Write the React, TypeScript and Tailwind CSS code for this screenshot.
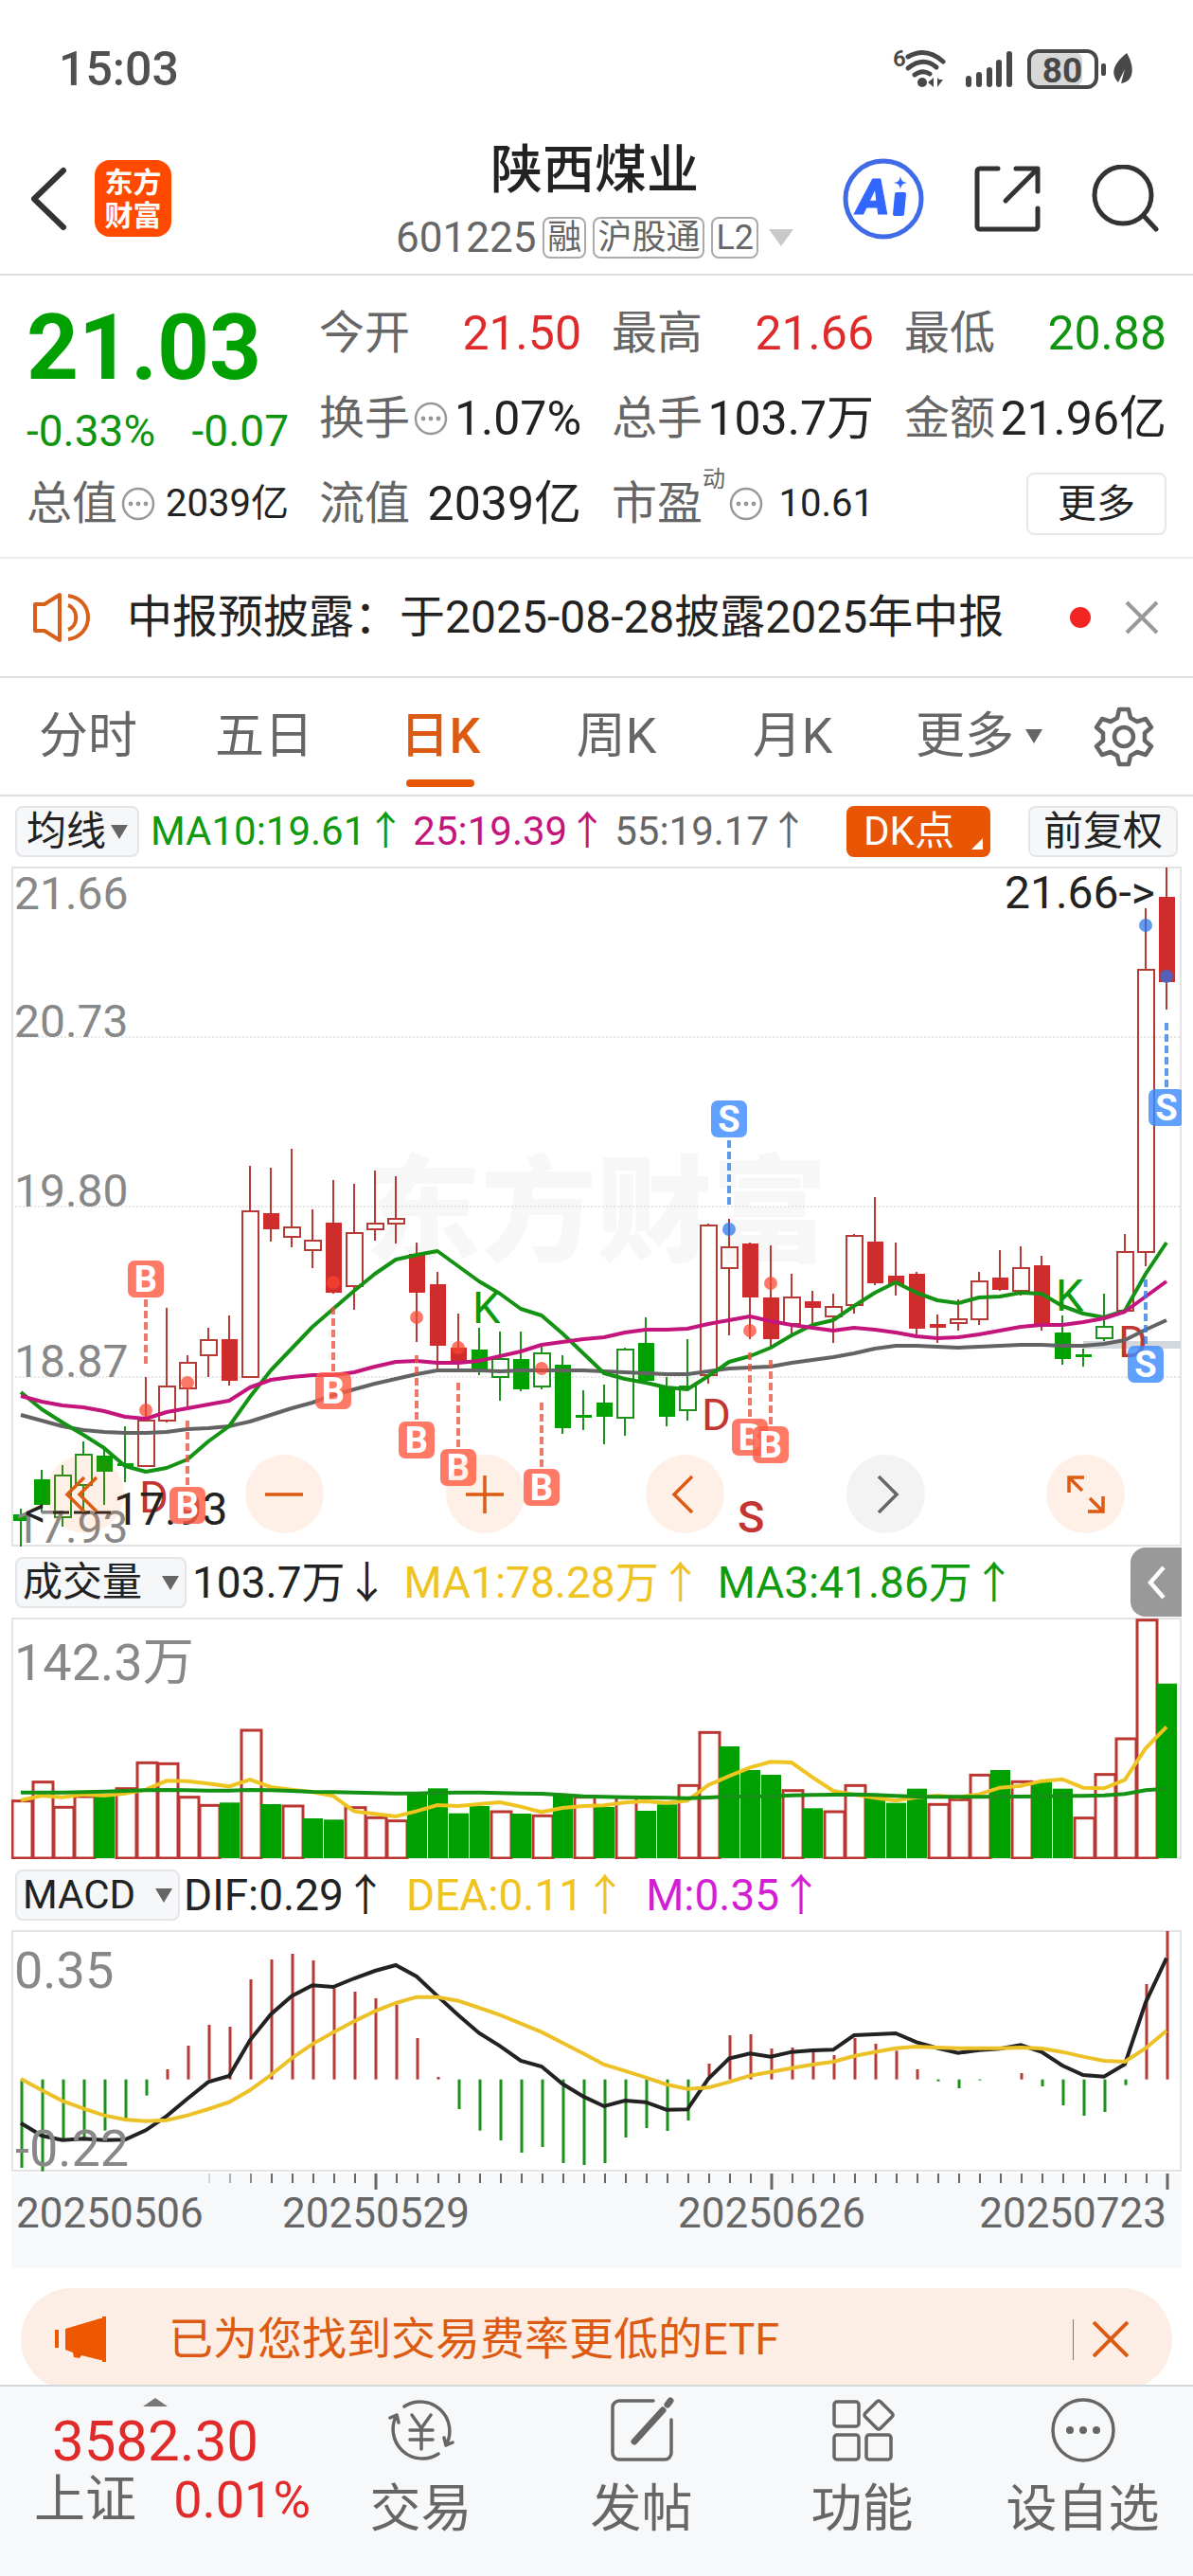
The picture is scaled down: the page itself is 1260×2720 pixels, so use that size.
import { useState, type ReactNode } from "react"

type Kind = "R" | "r" | "G" | "g"
type Candle = [high: number, top: number, bottom: number, low: number, kind: Kind]

// R / G are solid bodies, r / g are hollow ones
const candles: Candle[] = [
  [1593, 1599, 1606, 1633, "G"], [1552, 1562, 1589, 1597, "G"], [1547, 1558, 1602, 1612, "g"], [1522, 1536, 1568, 1594, "g"],
  [1528, 1537, 1554, 1589, "G"], [1506, 1545, 1548, 1565, "G"], [1454, 1500, 1548, 1549, "r"], [1381, 1464, 1500, 1502, "r"],
  [1431, 1439, 1466, 1487, "r"], [1402, 1415, 1431, 1454, "r"], [1389, 1414, 1458, 1463, "R"], [1231, 1279, 1454, 1454, "r"],
  [1233, 1281, 1298, 1311, "R"], [1213, 1296, 1306, 1317, "r"], [1277, 1310, 1320, 1339, "r"], [1246, 1291, 1365, 1366, "R"],
  [1250, 1302, 1358, 1383, "r"], [1236, 1292, 1298, 1310, "r"], [1242, 1287, 1292, 1313, "r"], [1312, 1324, 1365, 1417, "R"],
  [1343, 1356, 1421, 1445, "R"], [1387, 1423, 1439, 1446, "R"], [1402, 1425, 1448, 1452, "G"], [1406, 1435, 1454, 1479, "g"],
  [1406, 1435, 1467, 1469, "G"], [1421, 1429, 1464, 1467, "g"], [1431, 1441, 1508, 1514, "G"], [1468, 1494, 1497, 1510, "G"],
  [1462, 1481, 1496, 1525, "G"], [1423, 1425, 1497, 1516, "g"], [1391, 1418, 1458, 1460, "G"], [1454, 1465, 1496, 1506, "G"],
  [1414, 1464, 1489, 1500, "g"], [1292, 1294, 1452, 1461, "r"], [1287, 1317, 1339, 1410, "r"], [1312, 1313, 1370, 1414, "R"],
  [1315, 1370, 1414, 1422, "R"], [1345, 1370, 1398, 1410, "r"], [1363, 1374, 1381, 1397, "R"], [1366, 1380, 1390, 1418, "r"],
  [1303, 1305, 1378, 1387, "r"], [1264, 1311, 1355, 1357, "R"], [1312, 1347, 1356, 1368, "R"], [1343, 1345, 1403, 1412, "R"],
  [1388, 1398, 1402, 1418, "R"], [1372, 1393, 1397, 1405, "r"], [1343, 1353, 1393, 1399, "r"], [1320, 1349, 1362, 1363, "R"],
  [1316, 1339, 1363, 1368, "r"], [1326, 1336, 1399, 1405, "R"], [1389, 1407, 1435, 1441, "G"], [1424, 1430, 1433, 1443, "G"],
  [1366, 1401, 1413, 1416, "g"], [1303, 1322, 1384, 1384, "r"], [959, 1024, 1322, 1337, "r"], [916, 947, 1037, 1066, "R"],
]

const ma10 = [1470, 1488, 1502, 1515, 1529, 1548, 1554, 1550, 1541, 1522, 1506, 1475, 1447, 1424, 1401, 1382, 1363, 1345, 1330, 1325, 1321, 1337, 1353, 1366, 1382, 1389, 1408, 1429, 1450, 1456, 1460, 1465, 1467, 1453, 1438, 1432, 1423, 1410, 1399, 1394, 1379, 1365, 1354, 1365, 1373, 1376, 1370, 1369, 1365, 1366, 1379, 1387, 1391, 1384, 1345, 1312]
const ma25 = [1474, 1480, 1484, 1486, 1490, 1496, 1498, 1491, 1487, 1483, 1479, 1465, 1457, 1454, 1452, 1452, 1449, 1443, 1438, 1437, 1439, 1439, 1437, 1432, 1427, 1420, 1417, 1414, 1412, 1407, 1404, 1404, 1403, 1398, 1394, 1390, 1395, 1399, 1402, 1405, 1402, 1404, 1407, 1411, 1413, 1412, 1409, 1405, 1401, 1399, 1399, 1396, 1392, 1385, 1369, 1353]
const ma55 = [1494, 1500, 1506, 1510, 1512, 1513, 1513, 1512, 1509, 1508, 1506, 1501, 1494, 1487, 1481, 1473, 1467, 1461, 1456, 1451, 1447, 1447, 1447, 1448, 1447, 1447, 1447, 1447, 1448, 1449, 1450, 1451, 1451, 1448, 1445, 1444, 1443, 1439, 1436, 1433, 1429, 1424, 1421, 1421, 1422, 1423, 1422, 1421, 1420, 1420, 1421, 1421, 1419, 1415, 1404, 1394]

const volumes = [809, 749, 829, 795, 797, 770, 688, 691, 797, 823, 817, 585, 822, 825, 867, 871, 830, 862, 872, 785, 772, 851, 828, 843, 852, 856, 789, 797, 831, 797, 843, 823, 760, 592, 639, 714, 729, 776, 835, 843, 760, 800, 818, 773, 820, 805, 727, 714, 748, 750, 773, 863, 725, 612, 236, 440]
const volumeKinds = "rrrrGrrrrrGrGrGGrrrGGGGrGrGrGrGGrrGGGrGrrGGGrrrGrGGrrrrG"
const volumeMa1 = [810, 795, 800, 791, 795, 788, 776, 748, 749, 757, 766, 744, 768, 776, 784, 796, 845, 853, 861, 844, 825, 828, 822, 816, 830, 847, 834, 828, 826, 817, 813, 818, 811, 762, 733, 706, 688, 690, 737, 780, 792, 802, 811, 800, 795, 800, 791, 770, 764, 749, 743, 770, 772, 745, 645, 577]
const volumeMa3 = [785, 785, 785, 784, 782, 780, 778, 777, 778, 779, 779, 777, 778, 780, 783, 784, 785, 787, 788, 788, 786, 785, 785, 787, 788, 789, 793, 797, 799, 800, 801, 802, 803, 801, 798, 797, 797, 794, 793, 792, 791, 793, 796, 798, 799, 799, 799, 798, 798, 797, 796, 796, 794, 790, 778, 773]

const macd = [954, 965, 870, 868, 836, 800, 725, 642, 567, 501, 507, 357, 294, 276, 297, 385, 396, 417, 437, 543, 666, 768, 836, 867, 906, 888, 939, 945, 939, 858, 828, 837, 804, 624, 534, 531, 576, 573, 587, 597, 543, 561, 583, 642, 680, 702, 677, 674, 654, 696, 756, 789, 777, 692, 372, 204]
const dif = [812, 852, 866, 862, 866, 865, 835, 790, 735, 682, 663, 550, 468, 410, 376, 381, 354, 330, 312, 348, 410, 470, 527, 568, 615, 633, 688, 728, 759, 741, 746, 770, 769, 672, 608, 592, 602, 587, 582, 580, 534, 531, 528, 556, 575, 590, 581, 577, 565, 587, 630, 660, 665, 626, 430, 290]
const dea = [672, 708, 742, 766, 788, 801, 806, 803, 788, 768, 746, 708, 660, 607, 562, 525, 490, 458, 432, 413, 413, 425, 447, 470, 497, 524, 558, 592, 627, 647, 668, 690, 704, 700, 682, 662, 650, 638, 627, 618, 600, 587, 575, 570, 573, 575, 575, 575, 573, 576, 587, 602, 615, 618, 575, 520]

const tabs = ["分时", "五日", "日K", "周K", "月K"]

const RED = "#b83a35"
const GREEN = "#1a921a"

const cx = (i: number) => 22 + i * 22
const toPoints = (values: number[], y: (v: number) => number = (v) => v) =>
  values.map((v, i) => `${cx(i)},${y(v)}`).join(" ")

function Marker({ x, box, from, dot, letter }: { x: number; box: number; from: number; dot: number; letter: "B" | "S" }) {
  const buy = letter === "B"
  const color = buy ? "#ff5c45" : "#3d8bff"
  return (
    <g>
      <circle cx={x} cy={dot} r={7} fill={buy ? "#fb4531" : "#2476ea"} fillOpacity={0.72} />
      <line x1={x} x2={x} y1={from} y2={from + 68} stroke={buy ? "#e55540" : "#2f7fe8"} strokeOpacity={0.78} strokeWidth={4} strokeDasharray="8 4" />
      <rect x={x - 19} y={box} width={38} height={39} rx={7} fill={color} fillOpacity={0.82} />
      <text x={x} y={box + 33} fontSize={38} fontWeight={700} textAnchor="middle" fill="#fff">{letter}</text>
    </g>
  )
}

function PriceChart() {
  return (
    <svg viewBox="12 915 1236 718" className="block w-full" role="img" aria-label="日K线图">
      <text x={386} y={1322} fontSize={122} fontWeight={900} fill="#f7f7f7">东方财富</text>
      {[1095, 1274, 1454].map((y) => (
        <line key={y} x1={12} x2={1247} y1={y} y2={y} stroke="#cfcfcf" strokeWidth={1} strokeDasharray="2 2" />
      ))}
      <rect x={13} y={916} width={1234} height={716} fill="none" stroke="#e3e3e3" strokeWidth={2} />
      <rect x={1144} y={1416} width={103} height={8} fill="#d3d8dc" />
      {candles.map(([high, top, bottom, low, kind], i) => {
        const hollow = kind === "r" || kind === "g"
        const line = kind === "R" || kind === "r" ? RED : GREEN
        return (
          <g key={i}>
            <line x1={cx(i)} x2={cx(i)} y1={high} y2={top} stroke={line} strokeWidth={2} />
            <line x1={cx(i)} x2={cx(i)} y1={bottom} y2={low} stroke={line} strokeWidth={2} />
            {hollow ? (
              <rect x={cx(i) - 8} y={top} width={17} height={bottom - top} fill="none" stroke={line} strokeWidth={2} />
            ) : (
              <rect x={cx(i) - 8} y={top} width={17} height={bottom - top} fill={kind === "R" ? "#cf2d2d" : "#00a000"} />
            )}
          </g>
        )
      })}
      <g fontSize={48} fill="#888888">
        <text x={15} y={960}>21.66</text>
        <text x={15} y={1095}>20.73</text>
        <text x={15} y={1274}>19.80</text>
        <text x={15} y={1454}>18.87</text>
        <text x={15} y={1629}>17.93</text>
      </g>
      <text x={1061} y={959} fontSize={48} fill="#222">21.66-&gt;</text>
      <g fontSize={47}>
        <text x={147} y={1597} fill="#c43432">D</text>
        <text x={741} y={1510} fill="#c43432">D</text>
        <text x={1181} y={1433} fill="#c43432">D</text>
        <text x={779} y={1618} fill="#c43432" fontWeight={500}>S</text>
        <text x={499} y={1397} fill="#0a9a0a">K</text>
        <text x={1115} y={1384} fill="#0a9a0a">K</text>
      </g>
      <text x={26} y={1612} fontSize={44} fill="#222">&lt;</text>
      <line x1={56} x2={117} y1={1597} y2={1597} stroke="#222" strokeWidth={3} strokeDasharray="17 5" />
      <text x={120} y={1610} fontSize={48} fill="#222">17.93</text>
      <g fill="none" strokeWidth={4} strokeLinejoin="round">
        <polyline points={toPoints(ma55)} stroke="#636363" />
        <polyline points={toPoints(ma10)} stroke="#139213" />
        <polyline points={toPoints(ma25)} stroke="#c4157c" />
      </g>
      <Marker x={154} box={1331} from={1372} dot={1489} letter="B" />
      <Marker x={198} box={1570} from={1500} dot={1460} letter="B" />
      <Marker x={352} box={1449} from={1380} dot={1354} letter="B" />
      <Marker x={440} box={1501} from={1431} dot={1391} letter="B" />
      <Marker x={484} box={1530} from={1460} dot={1423} letter="B" />
      <Marker x={572} box={1551} from={1481} dot={1445} letter="B" />
      <Marker x={792} box={1498} from={1428} dot={1405} letter="B" />
      <Marker x={814} box={1506} from={1436} dot={1355} letter="B" />
      <Marker x={770} box={1162} from={1204} dot={1298} letter="S" />
      <Marker x={1210} box={1421} from={1351} dot={977} letter="S" />
      <Marker x={1232} box={1150} from={1080} dot={1031} letter="S" />
    </svg>
  )
}

function VolumeChart() {
  const y = (v: number) => v / 3 - 77
  return (
    <svg viewBox="12 0 1236 255" className="block w-full" role="img" aria-label="成交量图">
      <rect x={13} y={1} width={1234} height={253} fill="none" stroke="#e3e3e3" strokeWidth={2} />
      {volumes.map((v, i) =>
        volumeKinds[i] === "G" ? (
          <rect key={i} x={cx(i) - 10} y={y(v)} width={21} height={254 - y(v)} fill="#00a000" />
        ) : (
          <rect key={i} x={cx(i) - 9} y={y(v) + 1} width={21} height={253 - y(v)} fill="#fff" stroke="#bc3631" strokeWidth={3} />
        )
      )}
      <polyline points={toPoints(volumeMa1, y)} fill="none" stroke="#efc320" strokeWidth={4} />
      <polyline points={toPoints(volumeMa3, y)} fill="none" stroke="#139213" strokeWidth={4} />
      <text x={15} y={66} fontSize={54} fill="#888888">142.3万</text>
    </svg>
  )
}

function MacdChart() {
  const y = (v: number) => v / 3 - 67
  return (
    <svg viewBox="12 0 1236 255" className="block w-full" role="img" aria-label="MACD图">
      <rect x={13} y={1} width={1234} height={253} fill="none" stroke="#e3e3e3" strokeWidth={2} />
      {macd.map((v, i) => (
        <line key={i} x1={cx(i) + 1} x2={cx(i) + 1} y1={y(674)} y2={y(v)} stroke={v < 674 ? RED : GREEN} strokeWidth={3} />
      ))}
      <polyline points={toPoints(dif, y)} fill="none" stroke="#222" strokeWidth={4} />
      <polyline points={toPoints(dea, y)} fill="none" stroke="#ecc128" strokeWidth={4} />
      <text x={15} y={61} fontSize={54} fill="#888888">0.35</text>
      <text x={16} y={249} fontSize={54} fill="#888888">-0.22</text>
    </svg>
  )
}

function DateAxis() {
  return (
    <svg viewBox="12 0 1236 100" className="block w-full bg-[#f7f8fa]" role="img" aria-label="日期">
      {candles.map((_, i) => {
        if (i < 9) return null
        const major = i === 17 || i === 36 || i === 55
        return (
          <line key={i} x1={cx(i) + 1} x2={cx(i) + 1} y1={0} y2={major ? 17 : 10} stroke="#666" strokeOpacity={i < 12 ? (i - 8) * 0.25 : 1} strokeWidth={major ? 3 : 2} />
        )
      })}
      <g fontSize={44} fill="#666666">
        <text x={17} y={57}>20250506</text>
        <text x={397} y={57} textAnchor="middle">20250529</text>
        <text x={815} y={57} textAnchor="middle">20250626</text>
        <text x={1232} y={57} textAnchor="end">20250723</text>
      </g>
    </svg>
  )
}

function StatusIcons() {
  return (
    <svg width={260} height={48} viewBox="940 48 260 48" fill="#484848" aria-hidden="true">
      <text x={943} y={69} fontSize={24} fontWeight={600}>6</text>
      <g fill="none" stroke="#484848" strokeWidth={5} strokeLinecap="round">
        <path d="M959 59Q978 48 996 64" />
        <path d="M959 71Q975 58 989 70" />
        <path d="M966 78Q974 72 982 77" />
      </g>
      <circle cx={974} cy={86} r={5} />
      <path d="M986 81v10l-6-5zM990 81v10l6-8-4 0z" />
      <rect x={1020} y={79} width={6} height={12} rx={3} />
      <rect x={1031} y={75} width={6} height={16} rx={3} />
      <rect x={1042} y={70} width={6} height={21} rx={3} />
      <rect x={1052} y={62} width={6} height={29} rx={3} />
      <rect x={1063} y={53} width={6} height={38} rx={3} />
      <rect x={1088} y={54} width={55} height={36} rx={8} fill="#d8d8d8" />
      <rect x={1087} y={53} width={71} height={38} rx={10} fill="none" stroke="#484848" strokeWidth={4} />
      <text x={1122} y={86} fontSize={37} fontWeight={700} textAnchor="middle">80</text>
      <rect x={1163} y={66} width={5} height={13} rx={2} />
      <path d="M1190 55c8 13 9 30-6 32l4-15-7 14c-8-9-6-19 9-31z" />
    </svg>
  )
}

function Dots() {
  return (
    <svg className="mx-1 size-9 shrink-0" viewBox="0 0 36 36" fill="none" stroke="#999" strokeWidth={2.5} aria-hidden="true">
      <circle cx={18} cy={18} r={16} />
      <g fill="#999" stroke="none">
        <circle cx={10} cy={18} r={2.4} />
        <circle cx={18} cy={18} r={2.4} />
        <circle cx={26} cy={18} r={2.4} />
      </g>
    </svg>
  )
}

function Stat({ label, value, tone = "text-[#222]", dots, small, sup }: { label: string; value: string; tone?: string; dots?: boolean; small?: boolean; sup?: string }) {
  return (
    <div className="flex h-[90px] items-center whitespace-nowrap">
      <dt className="flex items-center text-[48px] leading-[56px] text-[#666]">
        {label}
        {sup && <span className="-mt-3 self-start text-[24px] leading-[28px]">{sup}</span>}
        {dots && <Dots />}
      </dt>
      <dd className={`ml-auto leading-[56px] ${small ? "text-[40px]" : "text-[50px]"} ${tone}`}>{value}</dd>
    </div>
  )
}

function Picker({ name, option, className }: { name: string; option: string; className: string }) {
  return (
    <label className={`flex h-[54px] shrink-0 items-center rounded-lg border-2 border-[#e3e5e9] bg-[#f6f7f9] ${className}`}>
      <select aria-label={name} className="appearance-none bg-transparent text-[42px] leading-[48px] text-[#222] outline-none">
        <option>{option}</option>
      </select>
      <svg className="h-4 w-[18px] shrink-0" viewBox="0 0 18 16" fill="#666" aria-hidden="true">
        <path d="M0 1h18L9 16z" />
      </svg>
    </label>
  )
}

function RoundButton({ label, muted, children }: { label: string; muted?: boolean; children: ReactNode }) {
  return (
    <button aria-label={label} className={`size-[83px] rounded-full ${muted ? "bg-[#f3f3f3] text-[#666]" : "bg-[#f26a10]/10 text-[#dd5a12]"}`}>
      <svg className="block size-full" viewBox="0 0 83 83" fill="none" stroke="currentColor" strokeWidth={3.5} aria-hidden="true">
        {children}
      </svg>
    </button>
  )
}

function NavItem({ label, children }: { label: string; children: ReactNode }) {
  return (
    <button className="flex flex-1 flex-col items-center text-[54px] leading-[60px] text-[#666]">
      <svg className="mb-4 size-[76px]" viewBox="0 0 76 76" fill="none" stroke="#666" strokeWidth={3.5} strokeLinecap="round" strokeLinejoin="round" aria-hidden="true">
        {children}
      </svg>
      {label}
    </button>
  )
}

export default function App() {
  const [activeTab, setActiveTab] = useState("日K")
  const [showNotice, setShowNotice] = useState(true)
  const [showBanner, setShowBanner] = useState(true)

  return (
    <div className="flex min-h-screen flex-col bg-white font-['Roboto','Noto_Sans_CJK_SC',sans-serif] text-[#222]">
      <div className="flex h-[130px] items-center justify-between pt-4 pr-[60px] pl-[62px]">
        <span className="text-[50px] leading-[56px] font-medium text-[#505050]">15:03</span>
        <StatusIcons />
      </div>

      <header className="grid h-[161px] grid-cols-[1fr_auto_1fr] items-center border-b-2 border-[#dcdcdc] pr-9 pl-8">
        <div className="flex items-center gap-7">
          <button aria-label="返回">
            <svg width={40} height={68} viewBox="0 0 40 68" fill="none" stroke="#333" strokeWidth={6} strokeLinecap="round" strokeLinejoin="round">
              <path d="M35 4 4 34l31 30" />
            </svg>
          </button>
          <a href="#home" className="flex size-[81px] flex-col items-center justify-center rounded-2xl bg-[#ff4a00] text-[30px] leading-[35px] font-bold text-white">
            <span>东方</span>
            <span>财富</span>
          </a>
        </div>
        <div className="pt-2.5 text-center">
          <h1 className="text-[55px] leading-[72px] font-medium">陕西煤业</h1>
          <div className="flex h-[72px] items-center gap-[7px] text-[36px] leading-[40px] text-[#666]">
            <span className="text-[44px]">601225</span>
            <span className="rounded-lg border-2 border-[#aaa] px-[3px]">融</span>
            <span className="rounded-lg border-2 border-[#aaa] px-[3px]">沪股通</span>
            <span className="rounded-lg border-2 border-[#aaa] px-[3px]">L2</span>
            <svg className="ml-1 h-[18px] w-[26px]" viewBox="0 0 26 18" fill="#c9c9c9" aria-hidden="true">
              <path d="M0 0h26L13 18z" />
            </svg>
          </div>
        </div>
        <div className="flex items-center justify-end gap-[52px]">
          <button aria-label="AI">
            <svg width={86} height={86} viewBox="0 0 86 86">
              <circle cx={43} cy={43} r={40} fill="#fff" stroke="#3f6ae8" strokeWidth={5} />
              <text x={15} y={59} fontSize={52} fontWeight={900} fontStyle="italic" fill="#3267ff" stroke="#3267ff" strokeWidth={1}>A</text>
              <path d="M57 36h8q2 0 2 2l-2 21q0 2-2 2h-8q-2 0-2-2l2-21q0-2 2-2z" fill="#3267ff" />
              <path d="M61 19c1 5 2 6 7 7-5 1-6 2-7 7-1-5-2-6-7-7 5-1 6-2 7-7z" fill="#3267ff" />
            </svg>
          </button>
          <button aria-label="分享">
            <svg width={72} height={72} viewBox="0 0 72 72" fill="none" stroke="#333" strokeWidth={5} strokeLinecap="round" strokeLinejoin="round">
              <path d="M26 4H7a3 3 0 0 0-3 3v58a3 3 0 0 0 3 3h58a3 3 0 0 0 3-3V46M45 4h23v24M66 6 34 38" />
            </svg>
          </button>
          <button aria-label="搜索">
            <svg width={72} height={72} viewBox="0 0 72 72" fill="none" stroke="#333" strokeWidth={5} strokeLinecap="round">
              <circle cx={34} cy={32} r={30} />
              <path d="m56 54 13 14" />
            </svg>
          </button>
        </div>
      </header>

      <dl className="grid h-[299px] grid-cols-4 content-start gap-x-8 border-b-2 border-[#ececec] px-7 pt-4">
        <div className="row-span-2 h-[180px] whitespace-nowrap text-[#0f940f]">
          <dt className="sr-only">最新价</dt>
          <dd className="pt-1 text-[96px] leading-[112px] font-bold text-[#00a000]">21.03</dd>
          <dd className="flex justify-between pt-1 text-[46px] leading-[56px]">
            <span>-0.33%</span>
            <span>-0.07</span>
          </dd>
        </div>
        <Stat label="今开" value="21.50" tone="text-[#de2a2a]" />
        <Stat label="最高" value="21.66" tone="text-[#de2a2a]" />
        <Stat label="最低" value="20.88" tone="text-[#0f940f]" />
        <Stat label="换手" value="1.07%" dots />
        <Stat label="总手" value="103.7万" />
        <Stat label="金额" value="21.96亿" />
        <Stat label="总值" value="2039亿" dots small />
        <Stat label="流值" value="2039亿" />
        <Stat label="市盈" value="10.61" dots small sup="动" />
        <div className="flex h-[90px] items-center justify-end">
          <button className="h-[66px] w-[148px] rounded-lg border-2 border-[#e8e8e8] text-[41px] leading-[48px]">更多</button>
        </div>
      </dl>

      {showNotice && (
        <div className="flex h-[126px] items-center border-b-2 border-[#dcdcdc] pr-9 pl-[34px]">
          <svg className="h-[54px] w-[62px] shrink-0" viewBox="0 0 62 54" fill="none" stroke="#d9601a" strokeWidth={4} strokeLinejoin="round" aria-hidden="true">
            <path d="M3 13h10L29 3v48L13 41H3zM38 14c11 4 11 22 0 26M38 4c28 4 28 42 0 46" />
          </svg>
          <a href="#notice" className="ml-[38px] text-[48px] leading-[56px] whitespace-nowrap">中报预披露：于2025-08-28披露2025年中报</a>
          <span className="ml-auto size-[22px] rounded-full bg-[#f52424]" />
          <button aria-label="关闭公告" className="ml-9" onClick={() => setShowNotice(false)}>
            <svg width={36} height={36} viewBox="0 0 36 36" stroke="#999" strokeWidth={4}>
              <path d="m2 2 32 32M34 2 2 34" />
            </svg>
          </button>
        </div>
      )}

      <nav className="flex h-[125px] items-stretch border-b-2 border-[#dcdcdc] text-[52px] leading-[60px] text-[#666]" aria-label="周期">
        {tabs.map((tab) => (
          <button
            key={tab}
            onClick={() => setActiveTab(tab)}
            className={`relative w-[186px] ${activeTab === tab ? "font-medium text-[#dd5a12]" : ""}`}
          >
            {tab}
            {activeTab === tab && <span className="absolute bottom-2 left-1/2 h-2 w-[72px] -translate-x-1/2 rounded-full bg-[#e85504]" />}
          </button>
        ))}
        <button className="ml-[37px] flex items-center gap-3 whitespace-nowrap">
          更多
          <svg className="h-[15px] w-[18px]" viewBox="0 0 18 15" fill="#666" aria-hidden="true">
            <path d="M0 0h18L9 15z" />
          </svg>
        </button>
        <button aria-label="设置" className="ml-auto pr-[41px]">
          <svg width={64} height={64} viewBox="0 0 64 64" fill="none" stroke="#666" strokeWidth={4.5} strokeLinejoin="round">
            <path d="M27 3h10l2 9 7 4 9-3 6 9-7 6v8l7 6-6 9-9-3-7 4-2 9H27l-2-9-7-4-9 3-6-9 7-6v-8l-7-6 6-9 9 3 7-4z" />
            <circle cx={32} cy={32} r={10} />
          </svg>
        </button>
      </nav>

      <div className="flex h-[74px] items-center pr-4 pl-4 text-[42px] leading-[48px] whitespace-nowrap">
        <Picker name="主图指标" option="均线" className="gap-1 px-2.5" />
        <div className="ml-3 flex gap-2">
          <span className="text-[#0f9a0f]">MA10:19.61↑</span>
          <span className="text-[#c4157c]">25:19.39↑</span>
          <span className="text-[#666]">55:19.17↑</span>
        </div>
        <button className="relative ml-auto h-[54px] w-[152px] rounded-lg bg-[#e85504] pr-5 text-white">
          DK点
          <svg className="absolute right-2 bottom-2 size-3" viewBox="0 0 12 12" fill="#fff" aria-hidden="true">
            <path d="M12 0v12H0z" />
          </svg>
        </button>
        <button className="ml-10 h-[54px] rounded-lg border-2 border-[#e3e5e9] bg-[#f6f7f9] px-3.5">前复权</button>
      </div>

      <main className="mx-3">
        <div className="relative">
          <PriceChart />
          <div className="absolute inset-x-0 bottom-3.5 flex justify-between pr-[60px] pl-9">
            <RoundButton label="最早"><path d="M41 24 23 42l18 18M54 24 36 42l18 18" /></RoundButton>
            <RoundButton label="缩小"><path d="M21 42h40" /></RoundButton>
            <RoundButton label="放大"><path d="M21 42h40M41 22v40" /></RoundButton>
            <RoundButton label="向左"><path d="M49 23 30 42l19 19" /></RoundButton>
            <RoundButton label="向右" muted><path d="m34 23 19 19-19 19" /></RoundButton>
            <RoundButton label="全屏"><path d="M40 24H24v16M24 24l14 14M44 60h16V44M60 60 46 46" /></RoundButton>
          </div>
        </div>

        <div className="flex h-[75px] items-center pl-1 text-[46px] leading-[52px] whitespace-nowrap">
          <Picker name="副图指标一" option="成交量" className="gap-5 px-1.5" />
          <div className="ml-1.5 flex gap-4">
            <span>103.7万↓</span>
            <span className="text-[#efc320]">MA1:78.28万↑</span>
            <span className="text-[#0f9a0f]">MA3:41.86万↑</span>
          </div>
          <button aria-label="展开侧栏" className="ml-auto h-[73px] w-[54px] rounded-l-2xl bg-[#999]">
            <svg className="mx-auto" width={24} height={40} viewBox="0 0 24 40" fill="none" stroke="#fff" strokeWidth={4.5}>
              <path d="M20 4 6 20l14 16" />
            </svg>
          </button>
        </div>
        <VolumeChart />

        <div className="flex h-[75px] items-center pl-1 text-[46px] leading-[52px] whitespace-nowrap">
          <Picker name="副图指标二" option="MACD" className="gap-5 px-1.5" />
          <div className="ml-1 flex gap-5">
            <span>DIF:0.29↑</span>
            <span className="text-[#efc320]">DEA:0.11↑</span>
            <span className="text-[#d31fd3]">M:0.35↑</span>
          </div>
        </div>
        <MacdChart />
        <div className="h-[2px]" />
        <DateAxis />
      </main>

      {showBanner && (
        <div className="h-[123px] overflow-hidden px-[22px] pt-[21px]">
          <div className="flex h-[108px] items-center rounded-full bg-[#fceee4] pr-[46px] pl-9 text-[#dd5a12]">
            <svg className="h-12 w-14 shrink-0" viewBox="0 0 56 48" fill="#ec5700" aria-hidden="true">
              <path d="M0 14h4v19H0zM11 13 48 2h6v44h-6l-20-5-2 3-6-1-1-5-8-3z" />
              <path d="M50 0h4v48h-4z" />
            </svg>
            <a href="#etf" className="ml-16 text-[47px] leading-[56px] whitespace-nowrap">已为您找到交易费率更低的ETF</a>
            <span className="ml-auto h-[43px] w-px bg-[#dd5a12]" />
            <button aria-label="关闭" className="ml-5" onClick={() => setShowBanner(false)}>
              <svg width={38} height={38} viewBox="0 0 38 38" stroke="currentColor" strokeWidth={4}>
                <path d="m1 1 36 36M37 1 1 37" />
              </svg>
            </button>
          </div>
        </div>
      )}

      <footer className="mt-auto flex h-[202px] border-t-2 border-[#d4d7da] bg-[#f7f8fa] pt-2">
        <button className="flex w-[328px] flex-col items-center pt-1">
          <svg className="h-[9px] w-[26px]" viewBox="0 0 26 9" fill="#777" aria-hidden="true">
            <path d="M0 9 13 0l13 9z" />
          </svg>
          <span className="pt-1 text-[60px] leading-[66px] text-[#e12b2b]">3582.30</span>
          <span className="flex w-full items-center justify-between pl-9 text-[54px] leading-[58px] text-[#666]">
            上证
            <span className="text-[#e12b2b]">0.01%</span>
          </span>
        </button>
        <NavItem label="交易">
          <path d="M20 13a31 31 0 0 1 44 41l7-3M56 63A31 31 0 0 1 12 22l-7 3M12 22l2 8M64 54l-2-8" />
          <path d="m28 22 10 14 10-14M38 36v22M26 38h24M26 48h24" />
        </NavItem>
        <NavItem label="发帖">
          <path d="M50 7H14a7 7 0 0 0-7 7v48a7 7 0 0 0 7 7h48a7 7 0 0 0 7-7V27" />
          <path d="m68 7-3 4M60 17 30 50" strokeWidth={7} />
        </NavItem>
        <NavItem label="功能">
          <rect x={8} y={8} width={26} height={26} rx={3} />
          <rect x={8} y={43} width={26} height={26} rx={3} />
          <rect x={42} y={43} width={26} height={26} rx={3} />
          <path d="M53 8q2-2 4 0l12 12q2 2 0 4L57 36q-2 2-4 0L41 24q-2-2 0-4z" />
        </NavItem>
        <NavItem label="设自选">
          <circle cx={38} cy={38} r={32} />
          <g fill="#666" stroke="none">
            <circle cx={24} cy={38} r={4} />
            <circle cx={38} cy={38} r={4} />
            <circle cx={52} cy={38} r={4} />
          </g>
        </NavItem>
      </footer>
    </div>
  )
}
